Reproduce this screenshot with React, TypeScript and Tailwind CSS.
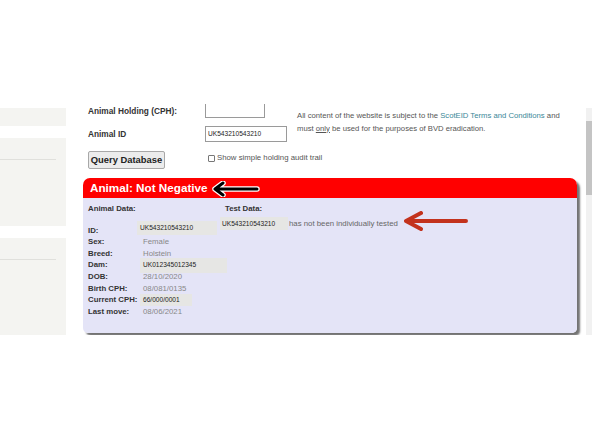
import React from "react";

const font = { fontFamily: '"Liberation Sans", Arial, sans-serif' };

type Row = { label: string; value: string; box?: string; h: string };

const rows: Row[] = [
  { label: "Sex:", value: "Female", h: "h-[12px]" },
  { label: "Breed:", value: "Holstein", h: "h-[11px]" },
  { label: "Dam:", value: "UK012345012345", box: "w-[87px] h-[15px]", h: "h-[12px]" },
  { label: "DOB:", value: "28/10/2020", h: "h-[12px]" },
  { label: "Birth CPH:", value: "08/081/0135", h: "h-[11px]" },
  { label: "Current CPH:", value: "66/000/0001", box: "w-[52px] h-[12px]", h: "h-[12px]" },
  { label: "Last move:", value: "08/06/2021", h: "h-[12px]" },
];

const Sidebar: React.FC = () => (
  <div className="w-[66px] shrink-0 pt-[4px]">
    <div className="h-[18px] bg-[#f4f4f1]" />
    <div className="mt-[12px] h-[88px] bg-[#f4f4f1] pt-[21px]">
      <div className="h-px w-[56px] bg-[#e0e0dc]" />
    </div>
    <div className="mt-[12px] h-[120px] bg-[#f4f4f1] pt-[21px]">
      <div className="h-px w-[56px] bg-[#e0e0dc]" />
    </div>
  </div>
);

const BlackArrow: React.FC = () => (
  <svg className="absolute left-[128px] top-[3px]" width="50" height="16" viewBox="0 0 50 16">
    <g fill="none" strokeLinecap="round" strokeLinejoin="round">
      <path d="M12 2 L4 8 L12 14 M4 8 L46 8" stroke="#fff" strokeWidth="5.5" />
      <path d="M12 2 L4 8 L12 14 M4 8 L46 8" stroke="#000" strokeWidth="3" />
    </g>
  </svg>
);

const RedArrow: React.FC = () => (
  <svg className="absolute left-[319px] top-[13px]" width="68" height="20" viewBox="0 0 68 20">
    <path
      d="M19 2 L4 10 L19 18 M4 10 L64 10"
      fill="none"
      stroke="#c3321d"
      strokeWidth="4"
      strokeLinecap="round"
      strokeLinejoin="round"
    />
  </svg>
);

const Form: React.FC = () => (
  <div className="-mt-[11px] ml-[5px] text-[#333]">
    <div className="flex">
      <div className="w-[209px] shrink-0">
        <div className="flex h-[25px] items-end">
          <span className="w-[117px] text-[8.3px] font-bold leading-[14px]">Animal Holding (CPH):</span>
          <div className="h-[21px] w-[60px] border border-[#9a9a9a] bg-white" />
        </div>
        <div className="mt-[7px] flex h-[17px] items-center">
          <span className="w-[117px] text-[8.3px] font-bold leading-[14px]">Animal ID</span>
          <div className="flex h-[16px] w-[82px] items-center border border-[#9a9a9a] bg-white pl-[2px] text-[6.6px] text-[#222]">
            UK543210543210
          </div>
        </div>
      </div>
      <p className="mt-[17px] whitespace-nowrap text-[7.7px] leading-[12.5px] text-[#555]">
        All content of the website is subject to the{" "}
        <span className="text-[#3a8898]">ScotEID Terms and Conditions</span> and
        <br />
        must <span className="underline">only</span> be used for the purposes of BVD eradication.
      </p>
    </div>
    <div className="mt-[7px] flex h-[18px] items-center">
      <div className="w-[117px] shrink-0">
        <button className="h-[18px] w-[77px] rounded-[2px] border border-[#a8a8a8] bg-[#ececec] text-[9.4px] font-bold leading-[16px] text-[#222]">
          Query Database
        </button>
      </div>
      <span className="ml-[3px] h-[7px] w-[7px] rounded-[1px] border border-[#777] bg-white" />
      <span className="ml-[2px] text-[7.8px] text-[#555]">Show simple holding audit trail</span>
    </div>
  </div>
);

const Panel: React.FC = () => (
  <div className="mt-[11px] w-[494px] rounded-t-[7px] rounded-b-[5px] shadow-[3px_3px_2px_rgba(0,0,0,0.55)]">
    <div className="relative h-[20px] rounded-t-[7px] bg-[#ff0000] pl-[7px] text-[11.7px] font-bold leading-[20px] text-white">
      Animal: Not Negative
      <BlackArrow />
    </div>
    <div className="relative flex h-[135px] rounded-b-[5px] bg-[#e4e4f7] pl-[5px] text-[7.8px]">
      <div className="w-[132px] shrink-0">
        <div className="h-[17px] pt-[5px] font-bold leading-[12px] text-[#333]">Animal Data:</div>
        <div className="flex h-[21px]">
          <span className="w-[49px] pt-[10px] font-bold leading-[12px] text-[#333]">ID:</span>
          <span className="mt-[6px] h-[14px] w-[80px] bg-[#e6e6e4] pl-[3px] text-[6.6px] leading-[14px] text-[#222]">
            UK543210543210
          </span>
        </div>
        {rows.map((r) => (
          <div key={r.label} className={`flex items-center ${r.h}`}>
            <span className="w-[52px] shrink-0 font-bold leading-[12px] text-[#333]">{r.label}</span>
            {r.box ? (
              <span className={`flex shrink-0 items-center bg-[#e6e6e4] pl-[3px] text-[6.6px] text-[#222] ${r.box}`}>
                {r.value}
              </span>
            ) : (
              <span className="pl-[3px] leading-[12px] text-[#888]">{r.value}</span>
            )}
          </div>
        ))}
      </div>
      <div>
        <div className="h-[17px] pl-[5px] pt-[5px] font-bold leading-[12px] text-[#333]">Test Data:</div>
        <div className="mt-[2px] flex h-[13px] items-center">
          <span className="flex h-[13px] w-[68px] items-center bg-[#e6e6e4] pl-[2px] text-[6.6px] text-[#222]">
            UK543210543210
          </span>
          <span className="pl-[1px] text-[#666]">has not been individually tested</span>
        </div>
      </div>
      <RedArrow />
    </div>
  </div>
);

export default function App() {
  return (
    <div className="h-[444px] w-[592px] overflow-hidden bg-white" style={font}>
      <div className="h-[104px]" />
      <div className="flex h-[231px] overflow-hidden">
        <Sidebar />
        <div className="flex-1 pl-[17px] pr-[9px]">
          <Form />
          <Panel />
        </div>
        <div className="mt-[4px] w-[6px] shrink-0 bg-[#f1f1f1] pt-[13px]">
          <div className="h-[74px] bg-[#c4c4c4]" />
        </div>
      </div>
    </div>
  );
}
